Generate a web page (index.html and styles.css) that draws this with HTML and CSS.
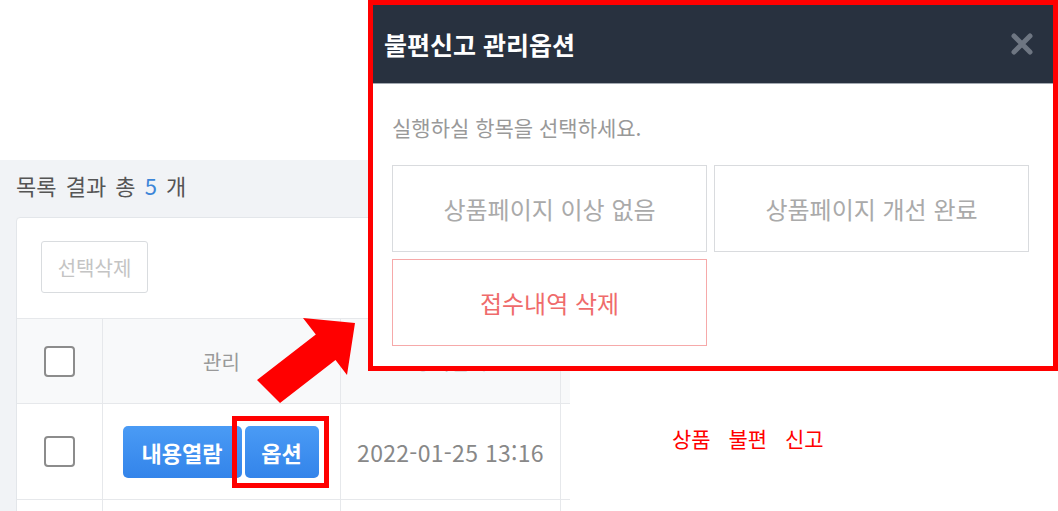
FILE: index.html
```html
<!DOCTYPE html>
<html lang="ko">
<head>
<meta charset="utf-8">
<title>불편신고 관리옵션</title>
<link rel="stylesheet" href="styles.css">
</head>
<body>
<div class="page">
  <div class="top-space"></div>
  <section class="panel">
    <h2 class="summary">목록 결과 총 <em>5</em> 개</h2>
    <div class="card">
      <div class="toolbar"><button class="btn-ghost" type="button">선택삭제</button></div>
      <div class="grid">
        <div class="row head">
          <div class="cell"><span class="checkbox"></span></div>
          <div class="cell">관리</div>
          <div class="cell">등록일시</div>
          <div class="cell"></div>
        </div>
        <div class="row body">
          <div class="cell"><span class="checkbox"></span></div>
          <div class="cell actions">
            <button class="btn-blue wide" type="button">내용열람</button>
            <button class="btn-blue marked" type="button">옵션</button>
          </div>
          <div class="cell date">2022-01-25 13:16</div>
          <div class="cell"></div>
        </div>
        <div class="row body">
          <div class="cell"></div>
          <div class="cell"></div>
          <div class="cell"></div>
          <div class="cell"></div>
        </div>
      </div>
    </div>
  </section>

  <div class="modal">
    <div class="modal-head">
      <h3 class="modal-title">불편신고 관리옵션</h3>
      <svg class="close" width="24" height="22" viewBox="0 0 24 22" aria-label="닫기">
        <path d="M4 3 L20 19 M20 3 L4 19" stroke="#6e7682" stroke-width="5" stroke-linecap="round" fill="none"/>
      </svg>
    </div>
    <div class="modal-body">
      <p class="modal-text">실행하실 항목을 선택하세요.</p>
      <div class="options">
        <button class="opt" type="button">상품페이지 이상 없음</button>
        <button class="opt" type="button">상품페이지 개선 완료</button>
        <button class="opt danger" type="button">접수내역 삭제</button>
      </div>
    </div>
  </div>

  <svg class="arrow" width="110" height="100" viewBox="0 0 110 100">
    <polygon points="7,70 65.8,24.6 53,8 105,13 97,65 85.5,50.1 30,93" fill="#ff0000"/>
  </svg>

  <p class="note">상품 불편 신고</p>
</div>
</body>
</html>
```
FILE: styles.css
```css
* { box-sizing: border-box; }
html, body { margin: 0; padding: 0; background: #fff; }
body {
  font-family: "Noto Sans CJK KR", "Noto Sans", sans-serif;
  width: 1058px;
  height: 511px;
  overflow: hidden;
}
.page { position: relative; width: 1058px; height: 511px; }
.top-space { height: 160px; }

.panel {
  width: 570px;
  height: 351px;
  background: #f1f3f6;
  overflow: hidden;
  padding: 10px 0 0 16px;
}
.summary {
  margin: 0;
  font-size: 22px;
  line-height: 30px;
  font-weight: 400;
  color: #555;
  word-spacing: 3px;
}
.summary em { font-style: normal; color: #3d86d8; }

.card {
  margin-top: 17px;
  width: 700px;
  background: #fff;
  border: 1px solid #e3e6ea;
  border-radius: 4px 0 0 0;
}
.toolbar { padding: 23px 0 25px 24px; }
.btn-ghost {
  width: 107px;
  height: 52px;
  border: 1px solid #d9dcdf;
  border-radius: 3px;
  background: #fff;
  color: #c4c4c4;
  font-family: inherit;
  font-size: 20px;
  padding: 0;
}

.row {
  display: grid;
  grid-template-columns: 86px 238px 220px 1fr;
  border-top: 1px solid #e6e8eb;
}
.row.head { height: 85px; background: #f8f9fa; }
.row.body { height: 96px; }
.cell {
  border-right: 1px solid #e6e8eb;
  display: flex;
  align-items: center;
  justify-content: center;
  font-size: 20px;
  color: #999;
}
.checkbox {
  width: 31px;
  height: 31px;
  border: 2px solid #8c8c8c;
  border-radius: 4px;
  background: #fff;
}
.actions { gap: 3px; padding-right: 2px; }
.btn-blue {
  width: 74px;
  height: 52px;
  padding: 0;
  border: 0;
  border-radius: 5px;
  background: linear-gradient(#4a9bf5, #3384ea);
  color: #fff;
  font-family: inherit;
  font-size: 22px;
  font-weight: 700;
  position: relative;
}
.btn-blue.wide { width: 119px; }
.btn-blue.marked::after {
  content: "";
  position: absolute;
  top: -10px;
  bottom: -10px;
  left: -13px;
  right: -10px;
  border: 5px solid #ff0000;
}
.date { font-size: 23px; letter-spacing: 0.3px; color: #888; }

.modal {
  position: absolute;
  left: 368px;
  top: 0;
  width: 690px;
  height: 371px;
  border: 5px solid #ff0000;
  background: #fff;
}
.modal-head {
  height: 79px;
  background: #28313f;
  border-bottom: 1px solid #a3a9b1;
  display: flex;
  align-items: center;
  justify-content: space-between;
  padding: 0 19px 0 11px;
}
.modal-title {
  margin: 0;
  color: #fff;
  font-size: 25px;
  font-weight: 700;
  line-height: 30px;
}
.close { display: block; }
.modal-body { padding: 30px 24px 0 19px; }
.modal-text {
  margin: 0;
  font-size: 21px;
  line-height: 26px;
  color: #999;
}
.options {
  margin-top: 25px;
  display: grid;
  grid-template-columns: 315px 315px;
  grid-auto-rows: 87px;
  gap: 7px;
}
.opt {
  border: 1px solid #d9dbde;
  background: #fff;
  color: #aaa;
  font-family: inherit;
  font-size: 24px;
  padding: 0;
}
.opt.danger { border-color: #f6a9a9; color: #ef6b6b; }

.arrow { position: absolute; left: 250px; top: 310px; }

.note {
  position: absolute;
  left: 672px;
  top: 424px;
  margin: 0;
  font-size: 21px;
  line-height: 28px;
  color: #ff0000;
  word-spacing: 12px;
}
```
